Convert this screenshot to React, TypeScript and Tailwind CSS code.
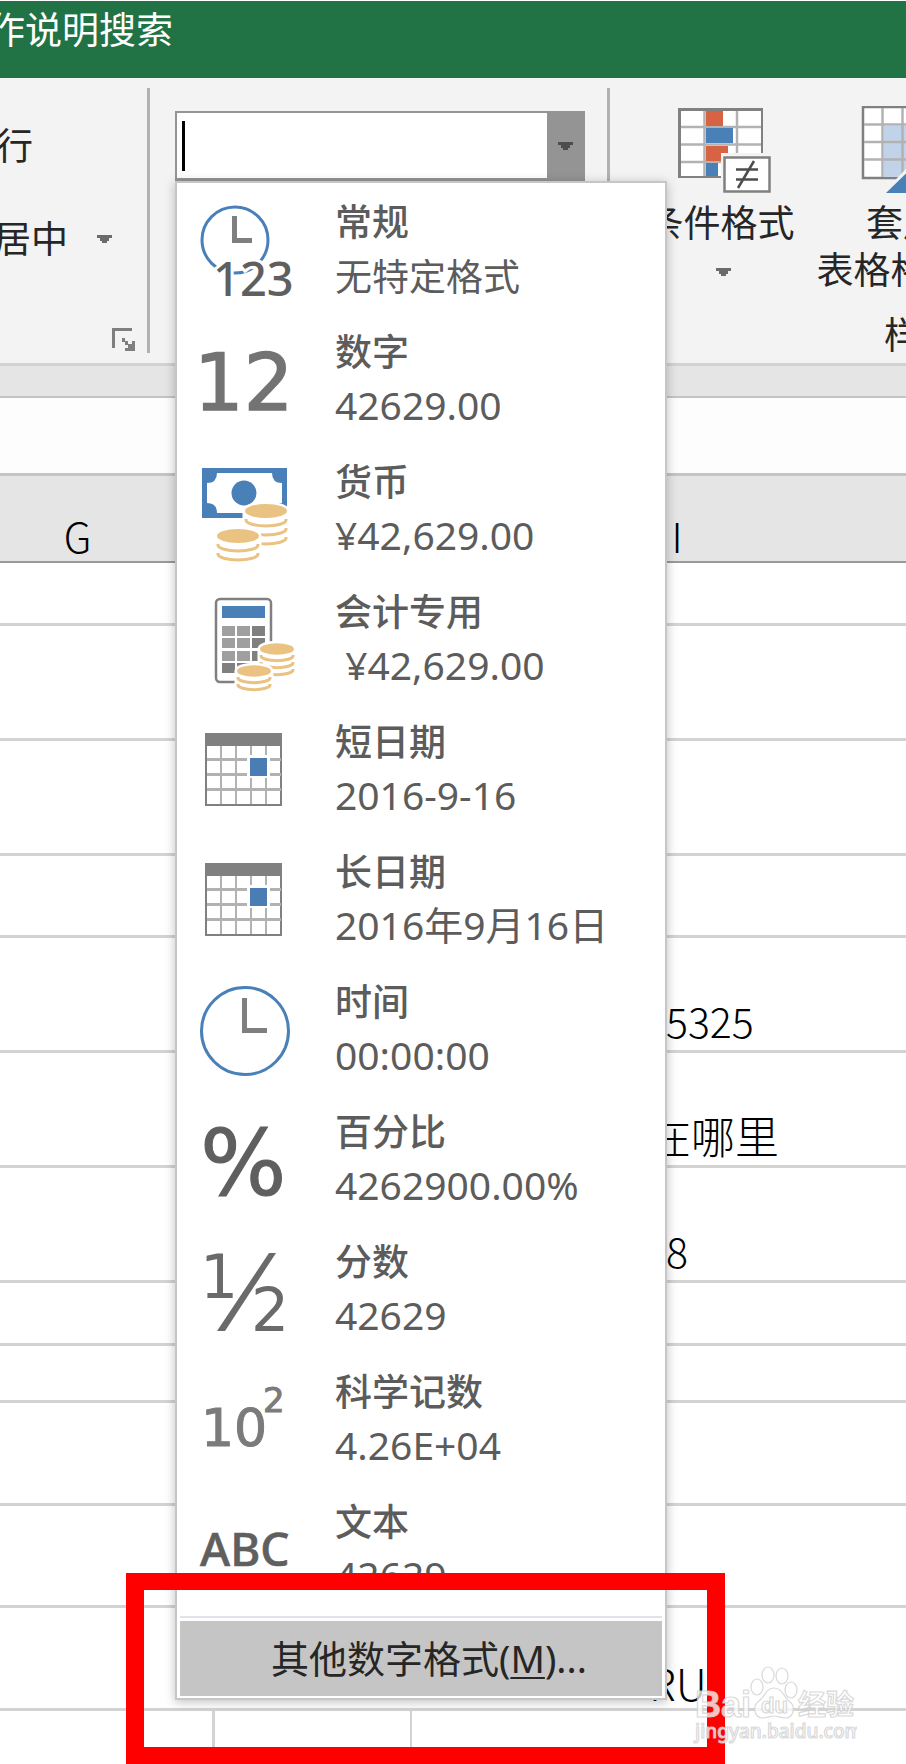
import { FC, ReactNode } from 'react';

interface NumberFormat {
  name: string;
  sample: string;
  icon: ReactNode;
}

interface SheetRow {
  height: string;
  value?: string;
  cell?: string;
}

const Coins: FC<{ x: number; y: number; rx: number; layers: number; step: number }> = ({
  x,
  y,
  rx,
  layers,
  step,
}) => {
  const ry = rx / 3;
  const bottom = y + layers * step;
  return (
    <g>
      <path
        d={`M${x - rx} ${y}A${rx} ${ry} 0 0 1 ${x + rx} ${y}V${bottom}A${rx} ${ry} 0 0 1 ${x - rx} ${bottom}Z`}
        fill="#fff"
        stroke="#fff"
        strokeWidth="5"
      />
      {Array.from({ length: layers }, (_, i) => (
        <path
          key={i}
          d={`M${x - rx + 1} ${y + (i + 1) * step - 1}v1A${rx - 1} ${ry - 1} 0 0 0 ${x + rx - 1} ${y + (i + 1) * step}v-1`}
          fill="none"
          stroke="#eac282"
          strokeWidth="3"
        />
      ))}
      <ellipse cx={x} cy={y} rx={rx} ry={ry} fill="#eac282" />
    </g>
  );
};

const GeneralIcon: FC = () => (
  <>
    <circle cx="39" cy="39" r="33" fill="none" stroke="#4a80b8" strokeWidth="3" />
    <path d="M36 15h5v22h15v5H36Z" fill="#7f7f7f" />
    <text
      x="17"
      y="95"
      className="font-['Noto_Sans'] text-[47px] font-medium"
      fill="#5f5f5f"
      stroke="#fff"
      strokeWidth="6"
      paintOrder="stroke"
    >
      123
    </text>
  </>
);

const NumberIcon: FC = () => (
  <text
    x="-2"
    y="79"
    className="font-['DejaVu_Sans'] text-[78px]"
    fill="#737373"
    stroke="#737373"
    strokeWidth="1.5"
  >
    12
  </text>
);

const CurrencyIcon: FC = () => (
  <>
    <path d="M6 7h85v50H6Z" fill="#4a80b8" />
    <path
      d="M21 12h55q0 10 10 10v20q-10 0 -10 10h-55q0 -10 -10 -10v-20q10 0 10 -10Z"
      fill="#fff"
    />
    <circle cx="48" cy="32" r="12.5" fill="#4a80b8" />
    <Coins x={70} y={50} rx={21} layers={3} step={9} />
    <Coins x={42} y={75} rx={21} layers={2} step={9} />
  </>
);

const AccountingIcon: FC = () => (
  <>
    <rect x="20" y="8" width="55" height="83" rx="4" fill="#fff" stroke="#808080" strokeWidth="2.5" />
    <path d="M26 15h43v12H26Z" fill="#4a80b8" />
    <path
      d="M26 35h13v10H26ZM41 35h13v10H41ZM26 47h13v10H26ZM41 47h13v10H41ZM26 60h13v10H26ZM41 60h13v10H41Z"
      fill="#9f9f9f"
    />
    <path d="M56 35h13v10H56ZM56 47h13v10H56ZM56 60h13v10H56ZM26 72h13v10H26ZM41 72h13v10H41Z" fill="#808080" />
    <Coins x={81} y={58} rx={17} layers={3} step={7} />
    <Coins x={58} y={80} rx={17} layers={2} step={7} />
  </>
);

const CalendarIcon: FC = () => (
  <>
    <path d="M10 24h75v60H10Z" fill="#fff" stroke="#808080" strokeWidth="2" />
    <path d="M9 12h77v13H9Z" fill="#808080" />
    <path d="M25 25v58M40 25v58M55 25v58M70 25v58" stroke="#b2b2b2" strokeWidth="2" />
    <path d="M11 38.5h74M11 53.5h74M11 68.5h74" stroke="#b2b2b2" strokeWidth="3" />
    <path d="M51 34h23v23H51Z" fill="#fff" />
    <path d="M54 37h17v18H54Z" fill="#4a7db3" />
  </>
);

const TimeIcon: FC = () => (
  <>
    <circle cx="49" cy="50" r="43.5" fill="none" stroke="#4a80b8" strokeWidth="3" />
    <path d="M46 17h5v30h20v5H46Z" fill="#7f7f7f" />
  </>
);

const PercentIcon: FC = () => (
  <text
    x="4"
    y="84"
    className="font-['DejaVu_Sans'] text-[91px]"
    fill="#5f5f5f"
    stroke="#5f5f5f"
    strokeWidth="1"
  >
    %
  </text>
);

const FractionIcon: FC = () => (
  <g fill="#6a6a6a">
    <text x="4" y="57" className="font-['DejaVu_Sans'] text-[60px]">
      1
    </text>
    <path d="M73 12h7L29 90h-8Z" />
    <text x="55" y="90" className="font-['DejaVu_Sans'] text-[60px]">
      2
    </text>
  </g>
);

const ScientificIcon: FC = () => (
  <g fill="#7b7b7b" stroke="#7b7b7b" strokeWidth="1">
    <text x="5" y="75" className="font-['DejaVu_Sans'] text-[52px]">
      10
    </text>
    <text x="67" y="41" className="font-['DejaVu_Sans'] text-[34px]">
      2
    </text>
  </g>
);

const TextIcon: FC = () => (
  <text
    x="4"
    y="65"
    className="font-['Noto_Sans'] text-[46px] font-medium"
    fill="#5f5f5f"
    stroke="#5f5f5f"
    strokeWidth="0.6"
  >
    ABC
  </text>
);

const formats: NumberFormat[] = [
  { name: '常规', sample: '无特定格式', icon: <GeneralIcon /> },
  { name: '数字', sample: '42629.00', icon: <NumberIcon /> },
  { name: '货币', sample: '¥42,629.00', icon: <CurrencyIcon /> },
  { name: '会计专用', sample: ' ¥42,629.00', icon: <AccountingIcon /> },
  { name: '短日期', sample: '2016-9-16', icon: <CalendarIcon /> },
  { name: '长日期', sample: '2016年9月16日', icon: <CalendarIcon /> },
  { name: '时间', sample: '00:00:00', icon: <TimeIcon /> },
  { name: '百分比', sample: '4262900.00%', icon: <PercentIcon /> },
  { name: '分数', sample: '42629', icon: <FractionIcon /> },
  { name: '科学记数', sample: '4.26E+04', icon: <ScientificIcon /> },
  { name: '文本', sample: '42629', icon: <TextIcon /> },
];

const rows: SheetRow[] = [
  { height: 'h-[63px]' },
  { height: 'h-[115px]' },
  { height: 'h-[115px]' },
  { height: 'h-[82px]' },
  { height: 'h-[115px]', value: '5325', cell: 'pl-[254px] pb-2' },
  { height: 'h-[115px]', value: '在哪里', cell: 'pl-[235px] pb-2 text-[44px]' },
  { height: 'h-[115px]', value: '8', cell: 'pl-[254px] pb-2' },
  { height: 'h-[63px]' },
  { height: 'h-[57px]' },
  { height: 'h-[103px]' },
  { height: 'h-[102px]' },
  { height: 'h-[103px]', value: 'RU', cell: 'pl-[237px] pb-1 text-[44px]' },
  { height: 'h-[53px]' },
];

const Arrow: FC<{ className: string }> = ({ className }) => (
  <svg viewBox="0 0 15 8" className={`h-2 w-[15px] shrink-0 ${className}`} fill="currentColor" aria-hidden="true">
    <path d="M0 0h15v3H12v3H10v2H5V6H3V3H0Z" />
  </svg>
);

const FormatMenu: FC = () => (
  <div
    role="menu"
    className="absolute left-0 top-full z-10 w-[492px] border-2 border-[#c6c6c6] bg-white pt-px shadow-[0_2px_10px_rgba(0,0,0,0.25)]"
  >
    {formats.map(format => (
      <button
        key={format.name}
        type="button"
        role="menuitem"
        className="flex h-[130px] w-full items-center gap-[43px] pl-[19px] text-left text-[#5c5c5c]"
      >
        <svg viewBox="0 0 96 96" className="size-24 shrink-0 overflow-visible" aria-hidden="true">
          {format.icon}
        </svg>
        <span className="flex flex-col whitespace-pre leading-[55px]">
          <span className="text-[37px] font-medium">{format.name}</span>
          <span className={/\d/.test(format.sample) ? 'pb-1 text-[39px] leading-[51px]' : 'text-[37px]'}>
            {format.sample}
          </span>
        </span>
      </button>
    ))}
    <div className="mx-[3px] mt-0.5 border-t-2 border-[#e2e2ea] pb-0.5 pt-[3px]">
      <button
        type="button"
        role="menuitem"
        className="flex h-[75px] w-full items-center bg-[#c5c5c5] pl-[91px] text-[38px] text-[#262626]"
      >
        <span>
          其他数字格式(<u className="decoration-2 underline-offset-4">M</u>)...
        </span>
      </button>
    </div>
  </div>
);

const ConditionalIcon: FC = () => (
  <svg viewBox="0 0 94 88" className="ml-1.5 h-[88px] w-[94px]" aria-hidden="true">
    <path d="M1 2h85v70H1Z" fill="#808080" />
    <path d="M4 5h80v65H4Z" fill="#fff" />
    <path d="M27.5 5v65M60 5v65" stroke="#b2b2b2" strokeWidth="2.5" />
    <path d="M4 21h80M4 38.5h80M4 56h80" stroke="#b2b2b2" strokeWidth="2.5" />
    <path d="M29 5h17v15H29ZM29 40h22v15H29Z" fill="#d86344" />
    <path d="M29 22h27v15H29ZM29 57h12v13H29Z" fill="#4a80b8" />
    <path d="M44 47h50v41H44Z" fill="#f3f3f3" />
    <path d="M47.5 51.5h45v34h-45Z" fill="#fff" stroke="#808080" strokeWidth="2.5" />
    <path d="M59 63.5h22M59 73.5h22M77 55L61 82" stroke="#4d4d4d" strokeWidth="2.5" fill="none" />
  </svg>
);

const TableFormatIcon: FC = () => (
  <svg viewBox="0 0 88 88" className="size-[88px]" aria-hidden="true">
    <path d="M4 1h79v71H4Z" fill="#fff" stroke="#808080" strokeWidth="2.5" />
    <path d="M25 20h57v51H25Z" fill="#c0d3e9" />
    <path d="M23.5 2v69M43.5 2v69M63.5 2v69M5 18.5h77M5 36h77M5 53.5h77" stroke="#b2b2b2" strokeWidth="2.5" />
    <path d="M23 88L61 48V88Z" fill="#f3f3f3" />
    <path d="M27 87L61 54V87Z" fill="#4a80b8" />
  </svg>
);

const Ribbon: FC = () => (
  <div className="flex h-[288px] border-b-[3px] border-[#d2d2d2] bg-[#f3f3f3] py-2.5 text-[37px] leading-[37px] text-[#262626]">
    <div className="flex w-[150px] shrink-0 flex-col border-r-[3px] border-[#b1b1b1] pt-[39px]">
      <button type="button" className="-ml-1 self-start">
        行
      </button>
      <button type="button" className="-ml-1.5 mt-14 flex items-center gap-[29px] self-start">
        居中
        <Arrow className="text-[#6b6b6b]" />
      </button>
      <button type="button" aria-label="对齐设置" className="mb-0.5 mr-3 mt-auto self-end">
        <svg viewBox="0 0 23 23" className="size-[23px]" aria-hidden="true">
          <path d="M0 0h20v3H3v17H0ZM10 10h3v3h3v3h4v-3h3v10H13v-3h3v-3h-3v-3h-3Z" fill="#7f7f7f" />
        </svg>
      </button>
    </div>
    <div className="w-[460px] shrink-0 border-r-[3px] border-[#b1b1b1] pl-[25px] pt-[23px]">
      <div className="relative w-[410px]">
        <div className="flex h-[70px] border-2 border-b-[3px] border-[#949494] bg-white">
          <div className="relative flex-1">
            <input type="text" aria-label="数字格式" className="size-full px-2 outline-none" />
            <span className="absolute left-[5px] top-2 h-[50px] w-[3px] bg-black" />
          </div>
          <button type="button" aria-label="打开" className="flex w-9 items-center justify-center bg-[#949494]">
            <Arrow className="text-[#4d4d4d]" />
          </button>
        </div>
        <FormatMenu />
      </div>
    </div>
    <div className="flex shrink-0 flex-col pl-9 pt-[18px]">
      <div className="flex gap-[21px]">
        <button type="button" className="flex w-[149px] flex-col items-center">
          <ConditionalIcon />
          <span className="mt-2.5">条件格式</span>
          <Arrow className="ml-1.5 mt-[27px] text-[#6b6b6b]" />
        </button>
        <button type="button" className="flex w-[174px] flex-col items-center">
          <TableFormatIcon />
          <span className="mt-2.5">套用</span>
          <span className="mt-2.5 flex items-center gap-2.5">
            表格格式
            <Arrow className="text-[#6b6b6b]" />
          </span>
        </button>
      </div>
      <span className="mt-auto pl-[238px]">样式</span>
    </div>
  </div>
);

const Sheet: FC = () => (
  <table className="w-full table-fixed border-separate border-spacing-0 font-['Noto_Sans_CJK_SC',sans-serif] text-[41px] font-light leading-[44px] text-black">
    <colgroup>
      <col className="w-[215px]" />
      <col className="w-[197px]" />
      <col />
    </colgroup>
    <thead>
      <tr className="h-[87px] bg-[#e5e5e5]">
        <th className="border-b-2 border-[#999] pb-1 pr-[60px] align-bottom font-light">G</th>
        <th className="border-b-2 border-[#999] pb-1 align-bottom font-light">H</th>
        <th className="border-b-2 border-[#999] pb-1 pl-9 align-bottom font-light">I</th>
      </tr>
    </thead>
    <tbody>
      {rows.map((row, i) => {
        const last = i === rows.length - 1;
        const line = last ? '' : 'border-b-[3px]';
        return (
          <tr key={i} className={row.height}>
            <td className={`border-[#d3d3d3] ${line} ${last ? 'border-r-[3px]' : ''}`} />
            <td className={`border-[#d3d3d3] ${line} ${last ? 'border-r-2' : ''}`} />
            <td className={`whitespace-nowrap border-[#d3d3d3] align-bottom ${line} ${row.cell ?? ''}`}>
              {row.value}
            </td>
          </tr>
        );
      })}
    </tbody>
  </table>
);

const Watermark: FC = () => (
  <svg
    viewBox="0 0 168 84"
    className="absolute bottom-4 right-[49px] z-30 h-[84px] w-[168px]"
    fill="#fff"
    fillOpacity="0.75"
    stroke="#cfcfcf"
    strokeOpacity="0.8"
    strokeWidth="1.2"
  >
    <text x="6" y="53" className="font-['Liberation_Sans'] text-[36px] font-bold">
      Bai
    </text>
    <ellipse cx="68" cy="23" rx="6" ry="8" />
    <ellipse cx="79" cy="11" rx="6" ry="8" />
    <ellipse cx="93" cy="12" rx="6" ry="8" />
    <ellipse cx="102" cy="26" rx="6" ry="8" />
    <path d="M85 24C77 24 76 33 70 37C63 42 65 54 74 54C79 54 81 52 85 52C89 52 91 54 96 54C105 54 107 42 100 37C95 33 93 24 85 24Z" />
    <text x="72" y="49" className="font-['Liberation_Sans'] text-[22px] font-bold">
      du
    </text>
    <text x="109" y="51" className="font-['Noto_Sans_CJK_SC'] text-[28px] font-bold">
      经验
    </text>
    <text x="6" y="74" className="font-['Noto_Sans'] text-[19px] font-medium">
      jingyan.baidu.com
    </text>
  </svg>
);

const App: FC = () => (
  <main className="relative w-full overflow-hidden bg-white font-['Noto_Sans','Noto_Sans_CJK_SC',sans-serif]">
    <header className="mt-px flex h-[77px] items-start whitespace-nowrap bg-[#217346] pt-2.5 text-[37px] leading-[37px] text-white">
      <span className="-ml-3">作说明搜索</span>
    </header>
    <Ribbon />
    <div className="h-8 border-b-2 border-[#c4c4c4] bg-[#e5e5e5]" />
    <div className="h-[78px] border-b-[3px] border-[#c4c4c4] bg-[#fdfdfd]" />
    <Sheet />
    <div className="pointer-events-none absolute bottom-0 left-[126px] z-20 h-[191px] w-[599px] border-[17px] border-x-[18px] border-[#ff0000]" />
    <Watermark />
  </main>
);

export default App;
